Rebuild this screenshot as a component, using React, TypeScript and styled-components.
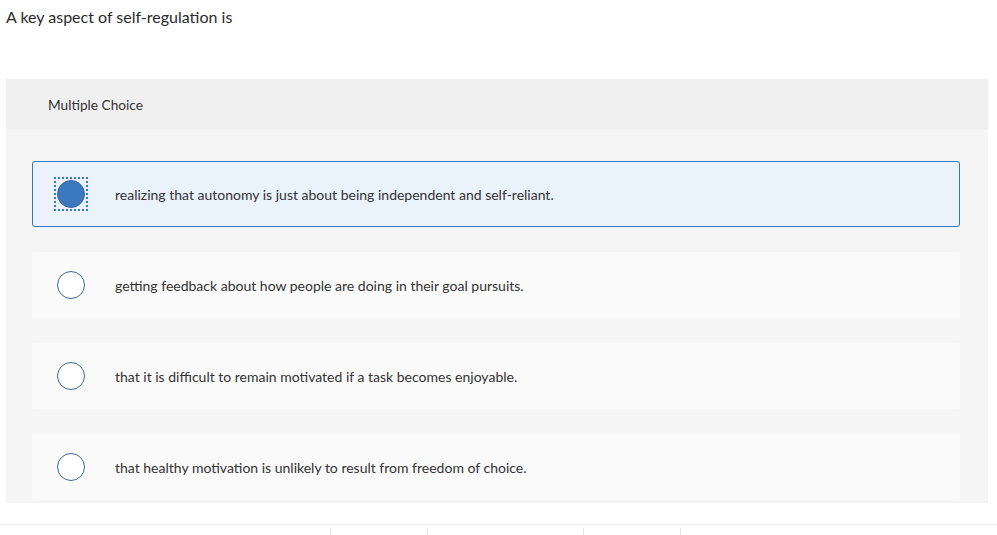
import React, { useState } from 'react';
import styled, { createGlobalStyle } from 'styled-components';

const GlobalStyle = createGlobalStyle`
  html, body {
    margin: 0;
    padding: 0;
    background: #ffffff;
    font-family: Lato, "Open Sans", Arial, sans-serif;
    color: #333333;
  }
`;

const Page = styled.div`
  width: 997px;
  height: 535px;
  overflow: hidden;
  display: flex;
  flex-direction: column;
`;

const Question = styled.div`
  padding: 6px 6px 0;
  height: 79px;
  box-sizing: border-box;
  font-size: 16px;
  line-height: 22px;
  color: #2b2b2b;
`;

const Panel = styled.div`
  margin: 0 9px 0 6px;
  background: #f5f5f5;
  padding-bottom: 3px;
`;

const PanelHeader = styled.div`
  height: 50px;
  background: #f0f0f0;
  display: flex;
  align-items: center;
  padding-left: 42px;
  font-size: 13.7px;
  color: #333;
`;

const ChoiceList = styled.div`
  display: flex;
  flex-direction: column;
  gap: 25px;
  padding: 32px 28px 0 26px;
`;

const Choice = styled.div<{ $selected: boolean }>`
  height: 66px;
  box-sizing: border-box;
  display: flex;
  align-items: center;
  padding-left: ${p => (p.$selected ? '23px' : '24px')};
  border-radius: 3px;
  background: ${p => (p.$selected ? '#eaf2fb' : '#fafafa')};
  border: ${p => (p.$selected ? '1px solid #3a77c2' : 'none')};
  cursor: pointer;
  font-size: 14px;
  color: #333;
`;

const RadioWrap = styled.div<{ $focused: boolean }>`
  width: 34px;
  height: 34px;
  margin-left: -2px;
  box-sizing: border-box;
  display: flex;
  align-items: center;
  justify-content: center;
  border: 2px dotted ${p => (p.$focused ? '#3a77c2' : 'transparent')};
  flex-shrink: 0;
`;

const Radio = styled.div<{ $checked: boolean }>`
  width: 28px;
  height: 28px;
  box-sizing: border-box;
  border-radius: 50%;
  border: 1.5px solid #3a6896;
  background: ${p => (p.$checked ? '#3b78bd' : '#ffffff')};
`;

const Label = styled.span`
  margin-left: 27px;
`;

const Footer = styled.div`
  margin-top: 21px;
  border-top: 1px solid #eeeeee;
  display: flex;
  height: 10px;
`;

const Tick = styled.span<{ $left: number }>`
  width: 1px;
  height: 7px;
  margin-top: 3px;
  margin-left: ${p => p.$left}px;
  background: #e6e6e6;
`;

const choices = [
  'realizing that autonomy is just about being independent and self-reliant.',
  'getting feedback about how people are doing in their goal pursuits.',
  'that it is difficult to remain motivated if a task becomes enjoyable.',
  'that healthy motivation is unlikely to result from freedom of choice.',
];

const App = () => {
  const [selected, setSelected] = useState<number>(0);

  return (
    <Page>
      <GlobalStyle />
      <Question>A key aspect of self-regulation is</Question>
      <Panel>
        <PanelHeader>Multiple Choice</PanelHeader>
        <ChoiceList>
          {choices.map((text, i) => (
            <Choice key={i} $selected={selected === i} onClick={() => setSelected(i)}>
              <RadioWrap $focused={selected === i}>
                <Radio $checked={selected === i} />
              </RadioWrap>
              <Label>{text}</Label>
            </Choice>
          ))}
        </ChoiceList>
      </Panel>
      <Footer>
        {[330, 96, 155, 96].map((l, i) => (
          <Tick key={i} $left={l} />
        ))}
      </Footer>
    </Page>
  );
};

export default App;
